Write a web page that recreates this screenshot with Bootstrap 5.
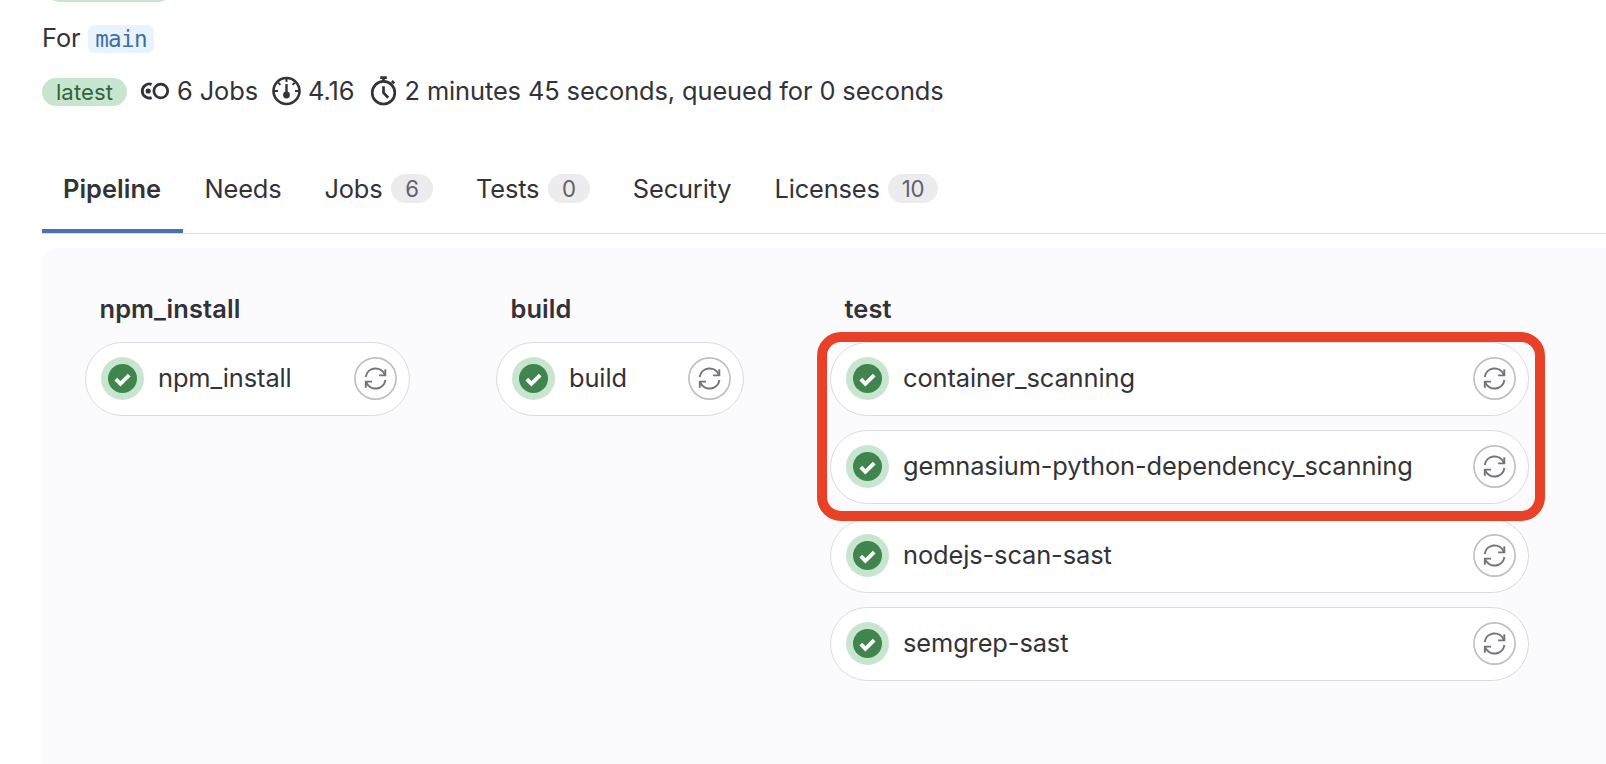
<!DOCTYPE html>
<html lang="en">
<head>
<meta charset="utf-8">
<title>Pipeline</title>
<link rel="stylesheet" href="https://cdn.jsdelivr.net/npm/bootstrap@5.3.0/dist/css/bootstrap.min.css">
<style>
body{font-family:Inter,"Liberation Sans",sans-serif;font-size:25.4px;line-height:36px;letter-spacing:-.1px;color:#333238;background:#fff;height:764px;overflow:hidden}
.page{padding-left:42px;height:764px}
.status-chip{width:128px;height:30px;margin:-28px 0 0 3px;background:#c8e6cf}
.ref-row{height:36px;margin-top:19px}
.ref-label{width:46px;margin-top:-2px}
.ref-name{font-family:"DejaVu Sans Mono",monospace;font-size:22.6px;letter-spacing:-.7px;line-height:28px;height:28px;width:66px;color:#3f6fa8;background:#e9f3fc;border-radius:7px}
.meta-row{height:36px;margin-top:16px}
.latest-chip{font-size:22.1px;line-height:28px;height:28px;width:85px;margin-top:2px;background:#c8e6cf;color:#306440;letter-spacing:.1px}
.tab-bar{margin-top:61px;height:64px;border-bottom:1px solid #dcdcde}
.tab-bar .nav-link{color:#333238;padding:0 21.5px;height:63px;line-height:37px;border-radius:0;letter-spacing:-.15px}
.tab-bar .nav-link.active{font-weight:600;border-bottom:4px solid #4a72ac;width:141px;padding-left:21px;letter-spacing:.05px}
.count{font-size:22.2px;line-height:29px;height:29px;min-width:42px;padding:0 13.5px;margin-left:8.5px;background:#ececef;color:#626168}
.graph{background:#fbfafd;margin-top:14px;height:516px;border-radius:14px 0 0 0;padding:43px 0 0 43px}
.stage h2{font-size:25.4px;line-height:36px;font-weight:600;letter-spacing:.1px;margin:0 0 15px;padding-left:14.5px}
.job{height:74px;border:1px solid #dcdcde;padding:0 12.5px 0 14.5px;margin-bottom:14.4px}
.job .ok{width:43px;height:43px;margin-right:14.5px;margin-top:-1px}
.job .name{margin-top:-2px}
.retry{width:43px;height:43px;margin-left:auto;margin-top:-1px}
.s1{width:325px;margin-right:86px}.s2{width:248px;margin-right:86px}.s3{width:699px}
.marker{left:-13px;top:41px;width:728px;height:189px;border:10px solid #e84127;border-radius:24px}
</style>
</head>
<body>
<svg class="d-none">
<symbol id="ok" viewBox="0 0 43 43"><circle cx="21.5" cy="21.5" r="21.5" fill="#c8e6cf"/><circle cx="21.5" cy="21.5" r="14.5" fill="#40844e"/><path d="M14.8 22.2l4.6 4.6 8.8-8.7" fill="none" stroke="#fff" stroke-width="3.8"/></symbol>
<symbol id="retry" viewBox="0 0 43 43"><circle cx="21.5" cy="21.5" r="20.6" fill="#fff" stroke="#bfbfc3" stroke-width="1.6"/><g fill="none" stroke="#737278" stroke-width="1.9"><path d="M11.7 20a10 10 0 0 1 19.2-2.2M31.4 23a10 10 0 0 1-19.2 2.2"/><path d="M31.3 12.2v6.2h-6.2M11.8 30.8v-6.2H18"/></g></symbol>
</svg>
<main class="page">
  <div class="status-chip rounded-pill"></div>
  <div class="ref-row d-flex align-items-center"><span class="ref-label">For</span><span class="ref-name text-center">main</span></div>
  <div class="meta-row d-flex align-items-center">
    <span class="latest-chip rounded-pill text-center">latest</span>
    <svg width="30" height="18" viewBox="0 0 30 18" style="margin-left:13px;margin-right:7px" fill="none" stroke="#333238" stroke-width="2.8"><circle cx="20.8" cy="9" r="6.9"/><path d="M11.6 2.4A7 7 0 1 0 11.6 15.6"/><circle cx="8.2" cy="9" r="2.6" fill="#333238" stroke="none"/></svg>
    <span style="width:95px">6 Jobs</span>
    <svg width="30" height="30" viewBox="0 0 30 30" style="margin-right:6px" fill="none" stroke="#333238" stroke-width="2.6"><circle cx="14.5" cy="15" r="13"/><path d="M14.5 8v10" stroke-width="2.4"/><circle cx="14.5" cy="19" r="3.4" fill="#333238" stroke="none"/><path d="M14.5 2v4M2 15h4M23 15h4M6.3 6.8l2.1 2.1M22.7 6.8l-2.1 2.1" stroke-width="2"/></svg>
    <span style="width:62px">4.16</span>
    <svg width="28" height="32" viewBox="0 0 28 32" style="margin-right:6.5px" fill="none" stroke="#333238" stroke-width="2.7"><circle cx="13.5" cy="17.7" r="11.3"/><path d="M13.5 11.2v6.6l4.7 4.9M10.2 2.6h6.6M13.5 2.5v4M21.8 6l2.4 2.4"/></svg>
    <span>2 minutes 45 seconds, queued for 0 seconds</span>
  </div>
  <nav class="tab-bar nav flex-nowrap">
    <a class="nav-link active" href="#">Pipeline</a>
    <a class="nav-link" href="#">Needs</a>
    <a class="nav-link d-flex" href="#">Jobs<span class="count rounded-pill text-center mt-1">6</span></a>
    <a class="nav-link d-flex" href="#">Tests<span class="count rounded-pill text-center mt-1">0</span></a>
    <a class="nav-link" href="#">Security</a>
    <a class="nav-link d-flex" href="#">Licenses<span class="count rounded-pill text-center mt-1">10</span></a>
  </nav>
  <section class="graph d-flex">
    <div class="stage s1"><h2>npm_install</h2>
      <div class="job bg-white rounded-pill d-flex align-items-center"><svg class="ok"><use href="#ok"/></svg><span class="name">npm_install</span><svg class="retry"><use href="#retry"/></svg></div>
    </div>
    <div class="stage s2"><h2>build</h2>
      <div class="job bg-white rounded-pill d-flex align-items-center"><svg class="ok"><use href="#ok"/></svg><span class="name">build</span><svg class="retry"><use href="#retry"/></svg></div>
    </div>
    <div class="stage s3 position-relative"><h2>test</h2>
      <div class="job bg-white rounded-pill d-flex align-items-center"><svg class="ok"><use href="#ok"/></svg><span class="name">container_scanning</span><svg class="retry"><use href="#retry"/></svg></div>
      <div class="job bg-white rounded-pill d-flex align-items-center"><svg class="ok"><use href="#ok"/></svg><span class="name">gemnasium-python-dependency_scanning</span><svg class="retry"><use href="#retry"/></svg></div>
      <div class="job bg-white rounded-pill d-flex align-items-center"><svg class="ok"><use href="#ok"/></svg><span class="name">nodejs-scan-sast</span><svg class="retry"><use href="#retry"/></svg></div>
      <div class="job bg-white rounded-pill d-flex align-items-center"><svg class="ok"><use href="#ok"/></svg><span class="name">semgrep-sast</span><svg class="retry"><use href="#retry"/></svg></div>
      <div class="marker position-absolute"></div>
    </div>
  </section>
</main>
<script src="https://cdn.jsdelivr.net/npm/bootstrap@5.3.0/dist/js/bootstrap.bundle.min.js"></script>
</body>
</html>
